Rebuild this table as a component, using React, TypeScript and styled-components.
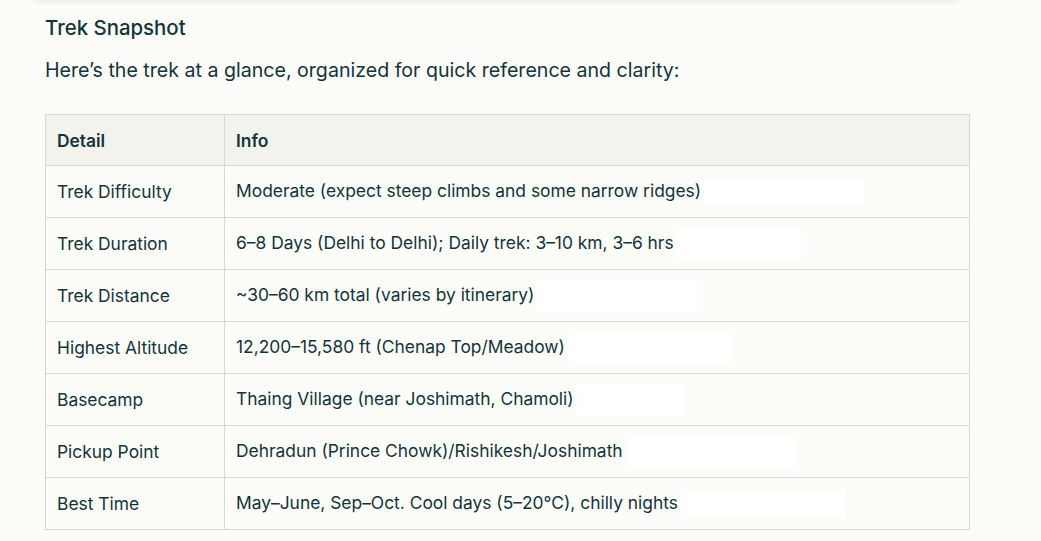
import React from "react";
import styled, { createGlobalStyle } from "styled-components";

const Global = createGlobalStyle`
  html, body { margin: 0; padding: 0; background: #fcfcf9; }
  body { font-family: Inter, "Noto Sans", sans-serif; color: #13343b; }
`;

const Page = styled.div`
  width: 1041px;
  height: 541px;
  overflow: hidden;
  display: flex;
  flex-direction: column;
`;

const TopCard = styled.div`
  margin: -40px 80px 0 30px;
  height: 40px;
  border-radius: 12px;
  background: #fcfcf9;
  box-shadow: 0 2px 6px rgba(0, 0, 0, 0.08);
  flex-shrink: 0;
`;

const Content = styled.div`
  padding: 14px 0 0 45px;
  width: 925px;
`;

const Heading = styled.h3`
  margin: 0;
  font-size: 20.4px;
  font-weight: 500;
  line-height: 28px;
`;

const Lead = styled.p`
  margin: 14px 0 0;
  font-size: 19.6px;
  line-height: 28px;
`;

const Table = styled.table`
  margin-top: 30px;
  width: 925px;
  border-collapse: collapse;
  font-size: 17.4px;
`;

const Th = styled.th`
  background: #f3f3ee;
  border: 1px solid #d9d9d4;
  text-align: left;
  font-weight: 600;
  height: 51px;
  padding: 0 11px;
  box-sizing: border-box;
`;

const Td = styled.td`
  border: 1px solid #d9d9d4;
  height: 52px;
  padding: 0 11px;
  box-sizing: border-box;
  vertical-align: middle;
  white-space: nowrap;
`;

const FirstCol = styled.col`
  width: 179px;
`;

const Ghost = styled.span<{ $w: number; $h: number }>`
  display: inline-block;
  vertical-align: middle;
  width: ${(p) => p.$w}px;
  height: ${(p) => p.$h}px;
  margin-left: 3px;
  background: #ffffff;
  border-radius: 2px;
`;

const rows: [string, string, number, number][] = [
  ["Trek Difficulty", "Moderate (expect steep climbs and some narrow ridges)", 160, 26],
  ["Trek Duration", "6–8 Days (Delhi to Delhi); Daily trek: 3–10 km, 3–6 hrs", 130, 28],
  ["Trek Distance", "~30–60 km total (varies by itinerary)", 166, 32],
  ["Highest Altitude", "12,200–15,580 ft (Chenap Top/Meadow)", 166, 28],
  ["Basecamp", "Thaing Village (near Joshimath, Chamoli)", 108, 32],
  ["Pickup Point", "Dehradun (Prince Chowk)/Rishikesh/Joshimath", 168, 30],
  ["Best Time", "May–June, Sep–Oct. Cool days (5–20°C), chilly nights", 164, 28],
];

export default function App() {
  return (
    <Page>
      <Global />
      <TopCard />
      <Content>
        <Heading>Trek Snapshot</Heading>
        <Lead>Here’s the trek at a glance, organized for quick reference and clarity:</Lead>
        <Table>
          <colgroup>
            <FirstCol />
            <col />
          </colgroup>
          <thead>
            <tr>
              <Th>Detail</Th>
              <Th>Info</Th>
            </tr>
          </thead>
          <tbody>
            {rows.map(([d, i, w, h]) => (
              <tr key={d}>
                <Td>{d}</Td>
                <Td>
                  {i}
                  <Ghost $w={w} $h={h} />
                </Td>
              </tr>
            ))}
          </tbody>
        </Table>
      </Content>
    </Page>
  );
}
